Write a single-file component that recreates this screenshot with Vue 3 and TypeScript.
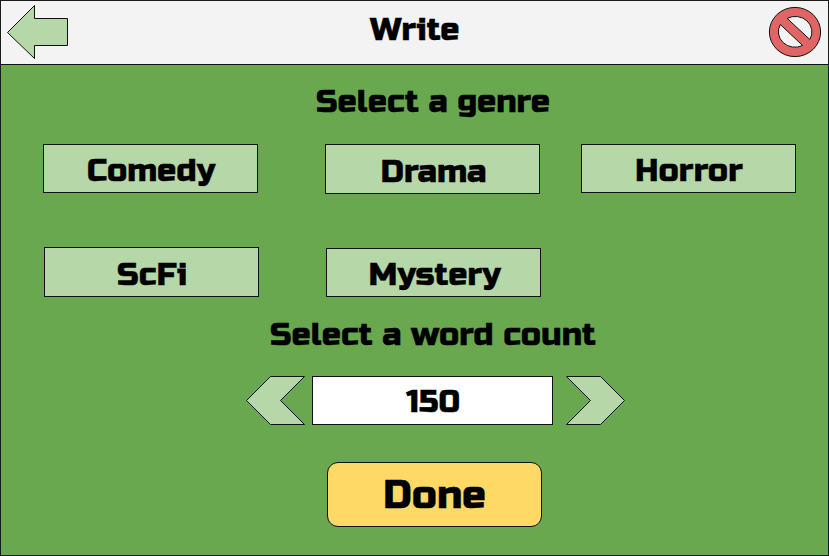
<script setup lang="ts">
interface Label {
  text: string
  x: number
  y: number
  width: number
}
interface Genre extends Label {
  slot: string
}

const title: Label = { text: 'Write', x: 370, y: 39, width: 89.5 }
const genreHeading: Label = { text: 'Select a genre', x: 315, y: 47, width: 234 }
const countHeading: Label = { text: 'Select a word count', x: 269, y: 35.6, width: 326 }
const rows: Genre[][] = [
  [
    { text: 'Comedy', x: 43, y: 36, width: 128, slot: 'first' },
    { text: 'Drama', x: 54.5, y: 35.5, width: 106, slot: 'second tall' },
    { text: 'Horror', x: 53, y: 36, width: 108, slot: 'third' },
  ],
  [
    { text: 'ScFi', x: 72, y: 36, width: 70, slot: 'first tall' },
    { text: 'Mystery', x: 41.5, y: 36, width: 132, slot: 'second low' },
  ],
]
const count: Label = { text: '150', x: 93, y: 35, width: 54 }
const done: Label = { text: 'Done', x: 55, y: 45, width: 103 }
</script>

<template>
  <main class="screen">
    <header class="bar">
      <svg class="back" width="62" height="56" viewBox="7 4 62 56" role="img">
        <path d="M7.5 32.5 34.5 5.5V18.5H67.5V45.5H34.5V58.5Z" />
      </svg>
      <svg class="title" width="700" height="63">
        <text :x="title.x - 69" :y="title.y" :textLength="title.width" lengthAdjust="spacingAndGlyphs">{{ title.text }}</text>
      </svg>
      <svg class="cancel" width="54" height="52" viewBox="768 6 54 52" role="img">
        <path
          fill-rule="evenodd"
          d="M769.4 32A25.6 24.6 0 1 1 820.6 32A25.6 24.6 0 1 1 769.4 32Z
             M787.2 18.4A16.6 15.5 0 0 1 809.8 39.5Z
             M780.3 24.5A16.6 15.5 0 0 0 802.6 45.5Z"
        />
      </svg>
    </header>

    <svg class="heading" width="827" height="79">
      <text :x="genreHeading.x" :y="genreHeading.y" :textLength="genreHeading.width" lengthAdjust="spacingAndGlyphs">{{ genreHeading.text }}</text>
    </svg>

    <section class="genres">
      <div v-for="(row, i) in rows" :key="i" class="row">
        <button v-for="g in row" :key="g.text" class="genre" :class="g.slot">
          <svg width="213" height="47">
            <text :x="g.x" :y="g.y" :textLength="g.width" lengthAdjust="spacingAndGlyphs">{{ g.text }}</text>
          </svg>
        </button>
      </div>
    </section>

    <svg class="count-heading" width="827" height="67">
      <text :x="countHeading.x" :y="countHeading.y" :textLength="countHeading.width" lengthAdjust="spacingAndGlyphs">{{ countHeading.text }}</text>
    </svg>

    <section class="stepper">
      <svg width="60" height="49" viewBox="246 376 60 49" role="img">
        <path d="M246.5 400.5 270.5 376.5H304.5L280.5 400.5 304.5 424.5H270.5Z" />
      </svg>
      <div class="value">
        <svg width="239" height="47">
          <text :x="count.x" :y="count.y" :textLength="count.width" lengthAdjust="spacingAndGlyphs">{{ count.text }}</text>
        </svg>
      </div>
      <svg width="60" height="49" viewBox="566 376 60 49" role="img">
        <path d="M566.5 376.5H600.5L624.5 400.5 600.5 424.5H566.5L590.5 400.5Z" />
      </svg>
    </section>

    <button class="done">
      <svg width="213" height="63">
        <text :x="done.x" :y="done.y" :textLength="done.width" lengthAdjust="spacingAndGlyphs">{{ done.text }}</text>
      </svg>
    </button>
  </main>
</template>

<style>
body {
  margin: 0;
}
</style>

<style scoped>
.screen {
  box-sizing: border-box;
  width: 829px;
  height: 556px;
  border: 1px solid #1a1a1a;
  background: #6aa84f;
  overflow: hidden;
}
svg {
  display: block;
  flex: none;
}
text {
  font-family: 'Russo One', Inter, 'Liberation Sans', sans-serif;
  font-size: 32px;
  font-weight: 400;
  fill: #000;
  stroke: #000;
  stroke-width: 0.35px;
}
path {
  fill: #b6d7a8;
  stroke: #111;
  stroke-width: 1;
}
.bar {
  display: flex;
  height: 63px;
  padding-left: 6px;
  background: #f3f3f3;
  border-bottom: 1px solid #111;
}
.back {
  margin-top: 3px;
}
.title {
  margin-right: -1px;
}
.cancel {
  margin-top: 5px;
}
.cancel path {
  fill: #e06666;
}
.genres {
  display: flex;
  flex-direction: column;
}
.row {
  display: flex;
  align-items: flex-start;
  height: 103px;
  padding-left: 42px;
}
.row + .row {
  height: 62px;
  padding-left: 43px;
}
button {
  display: block;
  box-sizing: border-box;
  margin: 0;
  padding: 0;
  width: 215px;
  border: 1px solid #111;
}
.genre {
  height: 49px;
  background: #b6d7a8;
}
.genre svg {
  overflow: visible;
}
.tall {
  height: 50px;
}
.second {
  margin-left: 67px;
}
.low {
  margin-top: 1px;
}
.third {
  margin-left: 41px;
}
.stepper {
  display: flex;
  height: 49px;
  padding-left: 245px;
}
.value {
  box-sizing: border-box;
  width: 241px;
  height: 49px;
  margin: 0 13px 0 6px;
  background: #fff;
  border: 1px solid #111;
}
.done {
  height: 65px;
  margin: 37px 0 0 326px;
  border-radius: 11px;
  background: #ffd966;
}
.done text {
  font-size: 40px;
}
</style>
